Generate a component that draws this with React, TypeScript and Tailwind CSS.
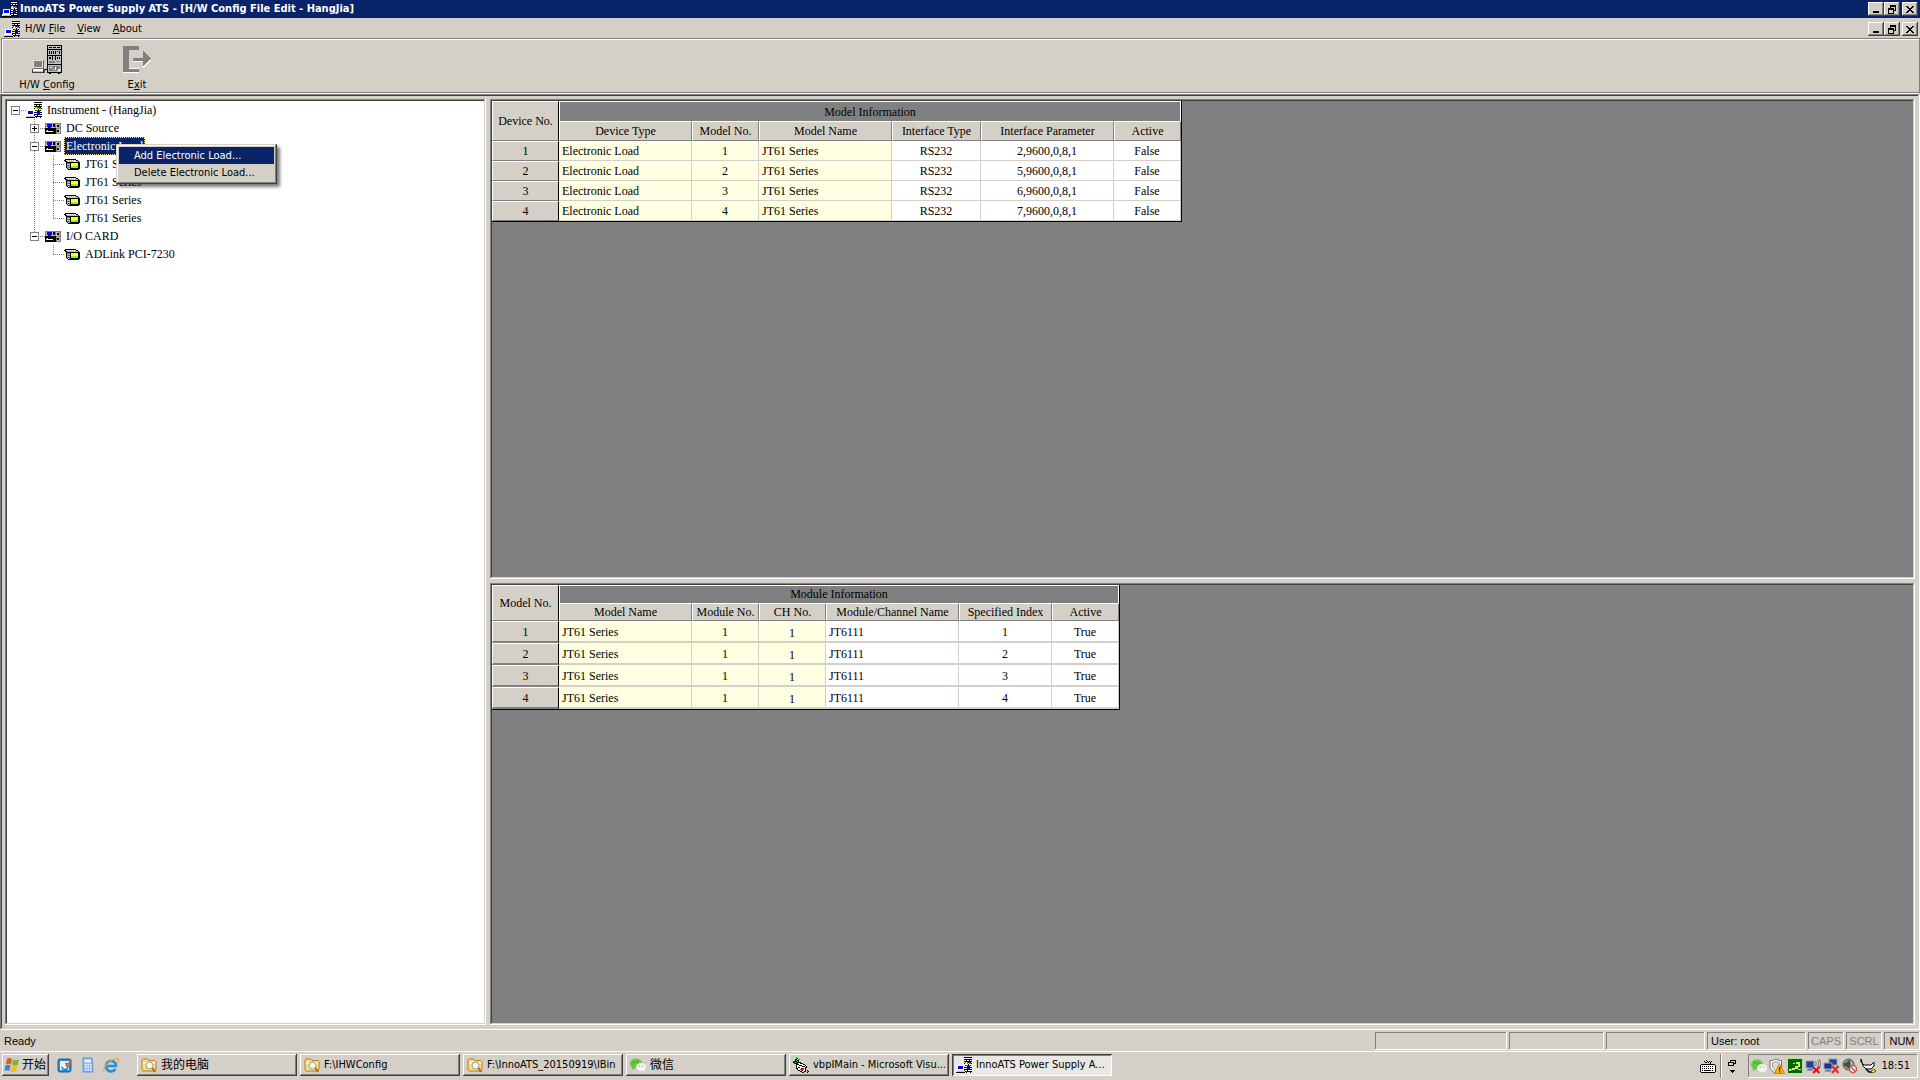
import type { ReactNode } from "react";

const raised =
  "bg-[#d4d0c8] shadow-[inset_-1px_-1px_#404040,inset_1px_1px_#fff,inset_-2px_-2px_#808080]";
const sunken =
  "p-0.5 shadow-[inset_-1px_-1px_#fff,inset_1px_1px_#808080,inset_-2px_-2px_#d4d0c8,inset_2px_2px_#404040]";
const thinSunken = "shadow-[inset_-1px_-1px_#fff,inset_1px_1px_#808080]";

const palette: Record<string, string> = {
  k: "#000000",
  w: "#ffffff",
  g: "#808080",
  l: "#c0c0c0",
  b: "#0000ff",
  r: "#ff0000",
  G: "#00c000",
  L: "#80ff00",
  y: "#ffff00",
  m: "#ff00ff",
  n: "#404040",
};

function Pixels({ rows }: { rows: string[] }) {
  const w = rows[0].length;
  return (
    <svg
      width={w}
      height={rows.length}
      viewBox={`0 0 ${w} ${rows.length}`}
      shapeRendering="crispEdges"
      className="shrink-0"
      aria-hidden="true"
    >
      {rows.flatMap((row, y) =>
        [...row].map((c, x) =>
          palette[c] ? <rect key={`${x}-${y}`} x={x} y={y} width={1} height={1} fill={palette[c]} /> : null,
        ),
      )}
    </svg>
  );
}

const rackRows = [
  "........kkkkkkkk",
  ".........wwwwww.",
  "........kkkkkkkk",
  ".........wkwwkw.",
  "........kkkkkkkk",
  ".........GwGkrk.",
  "........kyyGyGGk",
  ".........wwykww.",
  ".wwwwwww.kGGkGk.",
  ".wbbbbbw.wykbbw.",
  ".wbbbbbwkkbbbbkk",
  ".wbbbbbw.wwkbbw.",
  ".wwwwwwwkkkkbbkk",
  "wwwwwwwwkwwkwww.",
  "wlllllllwkkkkkkk",
  "kkkkkkkkk.k...k.",
];

const unitRows = [
  "gggggggggggggggg",
  "glbbbbblkkglllgg",
  "glbbbbblkkglkklg",
  "glbbbbblkkglkklg",
  "gllbbbllllglllgg",
  "kkkkkkkkkkkggggg",
  "kkkkkkkkkkkglllg",
  "kkwkkkkkkkkgkklg",
  "kwwwwwwwkkkgkklg",
  "kkkkkkkkkkkglllg",
  "kkkkkkkkkkkggggg",
];

const moduleRows = [
  ".kkkkkkkkkkk....",
  "kkwlwlwlwlwlkk..",
  ".kklllllllllllk.",
  "..kkkkkkkkkkkkkk",
  "..kgmmkyyyyyyykk",
  "..klllkyyyyyyykk",
  "..kgmmkwwwwwwwkk",
  "..klllkLLLLLLLkk",
  "..kgmmkLLLLLLLkk",
  "...kllkkkkkkkkkk",
  "....kkkkkkkkkkk.",
];

const RackIcon = () => <Pixels rows={rackRows} />;

function RackLarge() {
  return (
    <svg width="32" height="30" viewBox="0 0 32 30" shapeRendering="crispEdges" aria-hidden="true">
      <path d="M16 0h15v29h-15z" fill="#000" />
      <path d="M17 1h13v3h-13zM17 5h13v5h-13zM17 11h13v4h-13zM17 16h13v4h-13zM17 21h13v7h-13z" fill="#c0c0c0" />
      <path d="M18 2h3v1h-3zM22 2h3v1h-3zM26 2h3v1h-3zM18 6h1v3h-1zM20 6h1v3h-1zM22 6h1v3h-1zM24 6h1v3h-1zM26 6h1v1h-1zM28 6h1v3h-1zM18 12h2v2h-2zM21 11h1v4h-1zM24 11h1v4h-1zM26 12h1v2h-1zM28 12h1v2h-1z" fill="#000" />
      <path d="M18 17h6v2h-6zM25 17h4v1h-4zM18 22h11v5h-11z" fill="#808080" />
      <path d="M19 23h2v1h-2zM22 25h1v1h-1zM24 23h1v3h-1zM27 25h2v2h-2z" fill="#fff" />
      <path d="M18 29h2v1h-2zM27 29h2v1h-2zM13 25h3v1h-3z" fill="#000" />
      <path d="M1 15h12v10h-12z" fill="#606060" />
      <path d="M2 16h10v8h-10z" fill="#e4e4e4" />
      <path d="M3 17h8v6h-8z" fill="#808080" />
      <path d="M0 25h14v4h-14z" fill="#404040" />
      <path d="M1 25h11v2h-11z" fill="#fff" />
      <path d="M1 27h11v1h-11z" fill="#c0c0c0" />
    </svg>
  );
}

function ExitIcon() {
  return (
    <svg width="30" height="30" viewBox="0 0 30 30" shapeRendering="crispEdges" aria-hidden="true">
      <path d="M2 2h15v3h-10v19h10v5h-16v-2zM11 14h10v-6l9 8-9 8v-6h-10z" fill="#fff" />
      <path d="M1 1h16v4h-10v20h10v3h-16zM11 13h10v-7l8 8-8 8v-5h-10z" fill="#808080" />
    </svg>
  );
}

function FolderIcon() {
  return (
    <svg width="16" height="16" viewBox="0 0 16 16" className="shrink-0" aria-hidden="true">
      <path d="M1 3.5 2 2h5l1 1.5h6l1 1V13l-1 1H2l-1-1z" fill="#f9dc86" stroke="#b8801c" />
      <path d="M2 5h12v2H2z" fill="#fff3b8" />
      <circle cx="8.5" cy="8.5" r="3.5" fill="#f0fafc" stroke="#a09a7c" />
      <path d="m11.500 11 2.500 4" stroke="#b06a1c" strokeWidth="2" />
    </svg>
  );
}

function WindowsLogo() {
  return (
    <svg width="16" height="16" viewBox="0 0 16 16" className="shrink-0" aria-hidden="true">
      <path d="M3 2c2-1.500 3-1 5 0L6.800 7.500C5 6.500 4 6.500 1.800 7.500z" fill="#e8542a" />
      <path d="M9 2.400c2 1 3.500 1 6 0L13.800 8c-2 1-4 1-6 0z" fill="#7ab82c" />
      <path d="M1.500 8.500c2-1 3.500-1 5 0l-1.200 5.500c-1.800-1-3-1-5 0z" fill="#3f7fd8" />
      <path d="M7.500 9c2 1 4 1 6 0L12.200 14.500c-2 1-4 1-6 0z" fill="#f4bd1e" />
    </svg>
  );
}

function DesktopIcon() {
  return (
    <svg width="16" height="16" viewBox="0 0 16 16" aria-hidden="true">
      <rect x="1" y="2" width="13" height="13" rx="2" fill="#2a8ad8" stroke="#1a5ca8" />
      <rect x="3" y="4" width="9" height="9" fill="#f4faff" />
      <path d="M5 9.500a3 3 0 1 0 3-3" fill="none" stroke="#2a7ac8" strokeWidth="1.500" />
      <path d="m8 9 6-7 1.500 1.500-6 6.500z" fill="#d8683c" />
    </svg>
  );
}

function CalculatorIcon() {
  return (
    <svg width="14" height="16" viewBox="0 0 14 16" aria-hidden="true">
      <path d="M2 1h9l1 14H2z" fill="#8fb8ec" stroke="#6a92cc" />
      <path d="M3.500 2.500h6.500v3h-6.500z" fill="#e8f2ff" />
      <path d="M4 7h1.500v1.500H4zM6.500 7H8v1.500H6.500zM9 7h1.500v1.500H9zM4 9.500h1.500V11H4zM6.500 9.500H8V11H6.500zM9 9.500h1.500V11H9zM4 12h1.500v1.500H4zM6.500 12H8v1.500H6.500zM9 12h1.500v1.500H9z" fill="#fff" />
    </svg>
  );
}

function ExplorerIcon() {
  return (
    <svg width="16" height="16" viewBox="0 0 16 16" aria-hidden="true">
      <path d="M13.500 9H4.500M13.300 9.500A5.200 5.200 0 1 0 12.500 12" fill="none" stroke="#2a8fdc" strokeWidth="2.600" />
      <path d="M1 14.500C-1 11 8 1.500 14.500 1.500c1.500.5 1 2.500 0 4" fill="none" stroke="#e8b02a" strokeWidth="1.200" />
    </svg>
  );
}

function WeChatIcon() {
  return (
    <svg width="16" height="16" viewBox="0 0 16 16" className="shrink-0" aria-hidden="true">
      <ellipse cx="6" cy="6.500" rx="6" ry="5" fill="#62c93a" />
      <path d="m2 10-.5 3L5 11z" fill="#62c93a" />
      <ellipse cx="11" cy="10" rx="5" ry="4" fill="#f2f4ee" />
      <path d="m13 13 1.500 2 .5-3z" fill="#f2f4ee" />
      <path d="M3.500 4.500h1v1h-1zM7 4.500h1v1H7z" fill="#1c5a12" />
      <path d="M9 8.500h1v1H9zM12 8.500h1v1h-1z" fill="#8a8f88" />
    </svg>
  );
}

const VbIcon = () => (
  <Pixels
    rows={[
      "...G............",
      "...Gk...........",
      "..kk.GG.........",
      "..kGkk..........",
      "kkkkGk..........",
      "kGGkkkkk........",
      ".kkkkwwkkk......",
      "...kkkwwwwkk....",
      "...kwwkkkwwwk...",
      "...kwwwwwkkkwk..",
      "...kwkkwwwwwkk..",
      "...kkwwwkrrwk...",
      "....kwwrrrrwk...",
      ".....kkwrrwwk.k.",
      ".......kkwwkk.gk",
      ".........kk...k.",
    ]}
  />
);

const KeyboardIcon = () => (
  <Pixels
    rows={[
      "......k.........",
      "....k..k.k.k....",
      ".....kk.k.k.....",
      "..........k.....",
      ".kkkkkkkkkkkkkk.",
      "kwwwwwwwwwwwwwwk",
      "kwkwkwkwkwkwkwwk",
      "kwwwwwwwwwwwwwwk",
      "kwkwkwkwkwkwkwwk",
      "kwwwwwwwwwwwwwwk",
      "kwkwkkkkkkkwkwwk",
      "kwwwwwwwwwwwwwwk",
      ".kkkkkkkkkkkkkk.",
    ]}
  />
);

const ShieldIcon = () => (
  <svg width="16" height="16" viewBox="0 0 16 16" aria-hidden="true">
    <path d="M7 1c2 1.500 4 1.500 5.500 1.500V8c0 4-3 6-5.500 7C4 14 1 12 1 8V2.500C3 2.500 5 2.500 7 1z" fill="#fff" stroke="#707070" />
    <path d="M7 3.500c1.500 1 2.500 1 3.500 1V8c0 2-2 4-3.500 5C5 12 3.500 10 3.500 8V4.500c1 0 2 0 3.500-1z" fill="#d8d8d8" stroke="#a0a0a0" />
    <path d="m10.500 6 5 9.500h-10z" fill="#ffb400" stroke="#e07a00" />
    <path d="M10 9h1.200v3.500H10zM10 13.300h1.200v1.200H10z" fill="#402000" />
  </svg>
);

const GreenIcon = () => (
  <svg width="16" height="16" viewBox="0 0 16 16" shapeRendering="crispEdges" aria-hidden="true">
    <path d="M0 0h16v16H0z" fill="#b8dca8" />
    <path d="M1 1h14v14H1z" fill="#006a00" />
    <path d="M2 11h3v-1h3V8h3V6H9V4h4v5h-2v2h3v1h-3v-1H8v1H4v1H2zM6 5h2v1H6z" fill="#d8f070" />
  </svg>
);

const WirelessIcon = () => (
  <svg width="16" height="16" viewBox="0 0 16 16" aria-hidden="true">
    <path d="M1 3h8v7H1zM3 11h5v1.500H2z" fill="#27418c" stroke="#8fa0c8" />
    <path d="M10.500 3.500q1.500 2 0 4.500M12.500 2q2.500 3 0 7M14.500 1q2.500 4 0 9" fill="none" stroke="#707070" />
    <path d="m8 9 6.500 6M14.500 9 8 15" stroke="#e81414" strokeWidth="2.200" />
  </svg>
);

const NetworkIcon = () => (
  <svg width="17" height="16" viewBox="0 0 17 16" aria-hidden="true">
    <path d="M6 1h8v6H6z" fill="#27418c" stroke="#8fa0c8" />
    <path d="M1 5h8v6H1zM3 12h5v1.500H2z" fill="#1d3478" stroke="#8fa0c8" />
    <path d="m9 8 6.500 7M15.500 8 9 15" stroke="#e83020" strokeWidth="2.400" />
  </svg>
);

const MutedIcon = () => (
  <svg width="16" height="16" viewBox="0 0 16 16" aria-hidden="true">
    <circle cx="6.500" cy="6.500" r="5.500" fill="#8a8a8a" stroke="#5a5a5a" />
    <path d="M2 5h2l4-3.500v10L4 8H2z" fill="#484848" />
    <path d="M9 3.500q2 3 0 6" fill="none" stroke="#e0e0e0" />
    <circle cx="11" cy="11" r="3.500" fill="#fff" stroke="#d85040" strokeWidth="1.500" />
    <path d="m8.500 8.500 5 5" stroke="#d85040" strokeWidth="1.500" />
  </svg>
);

const PlugIcon = () => (
  <svg width="17" height="16" viewBox="0 0 17 16" aria-hidden="true">
    <path d="M1 1v3l3 3h7l3-3v4l-3 3H6L3 8z" fill="#fff" stroke="#000" />
    <path d="m6 11 3 3h3" fill="none" stroke="#000" strokeWidth="1.500" />
    <path d="m11 13 3-2 2 2-3 2z" fill="#e8e020" stroke="#606000" />
  </svg>
);

function WindowButtons({ scope }: { scope: string }) {
  const base = `flex h-3.5 w-4 items-center justify-center ${raised}`;
  return (
    <div className="flex">
      <button className={base} aria-label={`Minimize ${scope}`}>
        <Pixels rows={["........", "........", "........", "........", "........", "........", ".kkkkkk.", ".kkkkkk."]} />
      </button>
      <button className={base} aria-label={`Restore ${scope}`}>
        <Pixels
          rows={["..kkkkkk", "..kkkkkk", "..k....k", "kkkkkk.k", "kkkkkk.k", "k....kkk", "k....k..", "k....k..", "kkkkkk.."]}
        />
      </button>
      <button className={`ml-0.5 ${base}`} aria-label={`Close ${scope}`}>
        <Pixels rows={["kk....kk", ".kk..kk.", "..kkkk..", "...kk...", "..kkkk..", ".kk..kk.", "kk....kk"]} />
      </button>
    </div>
  );
}

type Branch = "none" | "line" | "tee" | "end" | "plus" | "minus" | "minusEnd" | "root";

function BranchCell({ kind }: { kind: Branch }) {
  const box = kind === "plus" || kind === "minus" || kind === "minusEnd" || kind === "root";
  const up = kind !== "none" && kind !== "root";
  const down = kind === "line" || kind === "tee" || kind === "plus" || kind === "minus";
  const across = kind !== "none" && kind !== "line";
  const drawing = (
    <svg width="19" height="18" viewBox="0 0 19 18" shapeRendering="crispEdges" aria-hidden="true">
      <g stroke="#808080" strokeDasharray="1 1" fill="none">
        {up && <path d="M8.500 0v9" />}
        {down && <path d="M8.500 10v8" />}
        {across && <path d="M8 9.500h11" />}
      </g>
      {box && (
        <>
          <path d="M4.500 5.500h8v8h-8z" fill="#fff" stroke="#808080" />
          <path d="M6 9.500h5" stroke="#000" />
          {kind === "plus" && <path d="M8.500 7v5" stroke="#000" />}
        </>
      )}
    </svg>
  );
  return box ? (
    <button aria-label={kind === "plus" ? "Expand" : "Collapse"}>{drawing}</button>
  ) : (
    drawing
  );
}

const tree: { label: string; branches: Branch[]; icon: string[]; selected?: boolean }[] = [
  { label: "Instrument - (HangJia)", branches: ["root"], icon: rackRows },
  { label: "DC Source", branches: ["none", "plus"], icon: unitRows },
  { label: "Electronic Load", branches: ["none", "minus"], icon: unitRows, selected: true },
  { label: "JT61 Series", branches: ["none", "line", "tee"], icon: moduleRows },
  { label: "JT61 Series", branches: ["none", "line", "tee"], icon: moduleRows },
  { label: "JT61 Series", branches: ["none", "line", "tee"], icon: moduleRows },
  { label: "JT61 Series", branches: ["none", "line", "end"], icon: moduleRows },
  { label: "I/O CARD", branches: ["none", "minusEnd"], icon: unitRows },
  { label: "ADLink PCI-7230", branches: ["none", "none", "end"], icon: moduleRows },
];

function InstrumentTree() {
  return (
    <div className={`relative w-[481px] shrink-0 bg-white ${sunken}`}>
      <ul className="font-['Liberation_Serif',serif] text-xs leading-[18px]">
        {tree.map((row, i) => (
          <li key={i} className="flex h-[18px] items-center">
            {row.branches.map((kind, j) => (
              <BranchCell key={j} kind={kind} />
            ))}
            <span className="flex w-[19px] shrink-0">
              <Pixels rows={row.icon} />
            </span>
            <span
              className={
                row.selected
                  ? "bg-[#0a246a] px-0.5 text-white outline-1 -outline-offset-1 outline-dotted outline-[#f5db95]"
                  : "px-0.5"
              }
            >
              {row.label}
            </span>
          </li>
        ))}
      </ul>
      <div
        role="menu"
        className="absolute top-[45px] left-[111px] w-[161px] bg-[#d4d0c8] p-[3px] text-[11px] leading-[17px] shadow-[inset_-1px_-1px_#404040,inset_1px_1px_#d4d0c8,inset_-2px_-2px_#808080,inset_2px_2px_#fff,3px_3px_3px_rgba(0,0,0,0.5)]"
      >
        <button role="menuitem" className="block w-full bg-[#0a246a] pl-[15px] text-left text-white">
          Add Electronic Load...
        </button>
        <button role="menuitem" className="block w-full pl-[15px] text-left">
          Delete Electronic Load...
        </button>
      </div>
    </div>
  );
}

type Column = { title: string; col: string; cell: string };

function InfoTable({
  corner,
  group,
  columns,
  rows,
  tall,
}: {
  corner: string;
  group: string;
  columns: Column[];
  rows: string[][];
  tall?: boolean;
}) {
  const head =
    "border-t border-l border-r border-b border-t-white border-l-white border-r-[#808080] border-b-[#808080] bg-[#d4d0c8]";
  const headHeight = tall ? "h-[18px]" : "h-5";
  const rowHeight = tall ? "h-[22px]" : "h-5";
  const thick = tall ? "border-b-2 pt-0.5" : "border-b pt-0";
  return (
    <div className="w-fit border-r border-b border-black">
      <table className="table-fixed border-separate border-spacing-0 font-['Liberation_Serif',serif] text-xs leading-4">
        <colgroup>
          <col className="w-[67px]" />
          {columns.map((c) => (
            <col key={c.title} className={c.col} />
          ))}
        </colgroup>
        <thead>
          <tr className={headHeight}>
            <th
              rowSpan={2}
              scope="col"
              className="border-t border-r border-b border-l border-t-white border-r-black border-b-[#808080] border-l-white bg-[#d4d0c8] p-0 font-normal"
            >
              {corner}
            </th>
            <th
              colSpan={columns.length}
              scope="colgroup"
              className="border-t border-r border-l border-white bg-[#808080] p-0 font-normal"
            >
              {group}
            </th>
          </tr>
          <tr className={headHeight}>
            {columns.map((c) => (
              <th key={c.title} scope="col" className={`${head} p-0 font-normal whitespace-nowrap`}>
                {c.title}
              </th>
            ))}
          </tr>
        </thead>
        <tbody>
          {rows.map((row, i) => (
            <tr key={i} className={rowHeight}>
              <th
                scope="row"
                className={`border-t border-r border-l ${thick} border-t-white border-r-black border-b-[#808080] border-l-white bg-[#d4d0c8] px-0 pb-0 font-normal`}
              >
                {i + 1}
              </th>
              {row.map((value, j) => (
                <td key={j} className={`border-r ${thick} border-[#d4d0c8] px-[3px] pb-0 ${columns[j].cell}`}>
                  {value}
                </td>
              ))}
            </tr>
          ))}
        </tbody>
      </table>
    </div>
  );
}

const modelColumns: Column[] = [
  { title: "Device Type", col: "w-[133px]", cell: "bg-[#ffffe1]" },
  { title: "Model No.", col: "w-[67px]", cell: "bg-[#ffffe1] text-center" },
  { title: "Model Name", col: "w-[133px]", cell: "bg-[#ffffe1]" },
  { title: "Interface Type", col: "w-[89px]", cell: "bg-white text-center" },
  { title: "Interface Parameter", col: "w-[133px]", cell: "bg-white text-center" },
  { title: "Active", col: "w-[67px]", cell: "bg-white text-center" },
];

const modelRows = ["2", "5", "6", "7"].map((port, i) => [
  "Electronic Load",
  String(i + 1),
  "JT61 Series",
  "RS232",
  `${port},9600,0,8,1`,
  "False",
]);

const moduleColumns: Column[] = [
  { title: "Model Name", col: "w-[133px]", cell: "bg-[#ffffe1]" },
  { title: "Module No.", col: "w-[67px]", cell: "bg-[#ffffe1] text-center" },
  { title: "CH No.", col: "w-[67px]", cell: "bg-[#ffffe1] text-center align-bottom" },
  { title: "Module/Channel Name", col: "w-[133px]", cell: "bg-white" },
  { title: "Specified Index", col: "w-[93px]", cell: "bg-white text-center" },
  { title: "Active", col: "w-[67px]", cell: "bg-white text-center" },
];

const channelRows = ["1", "2", "3", "4"].map((n) => ["JT61 Series", "1", "1", "JT6111", n, "True"]);

function TaskButton({ icon, active, children }: { icon: ReactNode; active?: boolean; children: ReactNode }) {
  return (
    <button
      className={`flex h-[22px] w-40 items-center gap-1 pr-1 pl-1 text-left whitespace-nowrap ${
        active
          ? "bg-[#eae8e4] shadow-[inset_1px_1px_#404040,inset_-1px_-1px_#fff,inset_2px_2px_#808080]"
          : raised
      }`}
    >
      {icon}
      <span className="overflow-hidden">{children}</span>
    </button>
  );
}

export default function App() {
  return (
    <div className="flex h-screen flex-col overflow-hidden bg-[#d4d0c8] font-['DejaVu_Sans_Condensed','Noto_Sans_CJK_SC',sans-serif] text-[11px] leading-4 text-black">
      <header className="flex h-[18px] shrink-0 items-center bg-[#0a246a] pr-0.5 pl-0.5 text-white">
        <RackIcon />
        <h1 className="ml-0.5 flex-1 font-bold">InnoATS Power Supply ATS - [H/W Config File Edit - HangJia]</h1>
        <WindowButtons scope="application" />
      </header>

      <nav className="flex h-5 shrink-0 items-center pt-0.5 pr-0.5 pl-1">
        <RackIcon />
        <div className="flex flex-1 gap-3 pl-[5px]">
          <button>
            H/W <u>F</u>ile
          </button>
          <button>
            <u>V</u>iew
          </button>
          <button>
            <u>A</u>bout
          </button>
        </div>
        <WindowButtons scope="document" />
      </nav>

      <div className="ml-px flex h-14 shrink-0 border border-[#808080] border-b-white pt-1 shadow-[inset_1px_1px_#fff,inset_0_-1px_#808080]">
        <button className="flex w-[90px] flex-col items-center gap-[3px] pt-0.5">
          <RackLarge />
          <span>
            H/W <u>C</u>onfig
          </span>
        </button>
        <button className="flex w-[90px] flex-col items-center gap-[3px] pt-0.5">
          <ExitIcon />
          <span>
            E<u>x</u>it
          </span>
        </button>
      </div>

      <main className={`flex min-h-0 flex-1 ${sunken}`}>
        <div className="flex min-w-0 flex-1 gap-1 p-[3px]">
          <InstrumentTree />
          <div className="flex min-w-0 flex-1 flex-col gap-1">
            <section className={`min-h-0 flex-[480] bg-[#808080] ${sunken}`}>
              <InfoTable corner="Device No." group="Model Information" columns={modelColumns} rows={modelRows} />
            </section>
            <section className={`min-h-0 flex-[442] bg-[#808080] ${sunken}`}>
              <InfoTable corner="Model No." group="Module Information" columns={moduleColumns} rows={channelRows} tall />
            </section>
          </div>
        </div>
      </main>

      <footer className="flex h-[21px] shrink-0 items-center gap-0.5 pl-1 font-['Liberation_Sans',sans-serif]">
        <span className="flex-1">Ready</span>
        <span className={`h-[18px] w-[132px] ${thinSunken}`} />
        <span className={`h-[18px] w-[95px] ${thinSunken}`} />
        <span className={`h-[18px] w-[99px] ${thinSunken}`} />
        <span className={`h-[18px] w-[99px] pl-1 leading-[18px] ${thinSunken}`}>User: root</span>
        <span className={`h-[18px] w-9 text-center leading-[18px] text-[#808080] ${thinSunken}`}>CAPS</span>
        <span className={`h-[18px] w-9 text-center leading-[18px] text-[#808080] ${thinSunken}`}>SCRL</span>
        <span className={`h-[18px] w-9 text-center leading-[18px] ${thinSunken}`}>NUM</span>
      </footer>

      <div className="flex h-[29px] shrink-0 items-start border-t border-white pt-0.5 pr-0.5 pl-0.5">
        <button className={`flex h-[22px] w-[47px] items-center gap-0.5 pl-0.5 text-xs whitespace-nowrap ${raised}`}>
          <WindowsLogo />
          开始
        </button>
        <div className="ml-2 flex h-[22px] w-20 items-center gap-2">
          <button aria-label="Show Desktop">
            <DesktopIcon />
          </button>
          <button aria-label="Calculator">
            <CalculatorIcon />
          </button>
          <button aria-label="Internet Explorer">
            <ExplorerIcon />
          </button>
        </div>
        <div className="flex flex-1 gap-[3px]">
          <TaskButton icon={<FolderIcon />}>
            <span className="text-xs">我的电脑</span>
          </TaskButton>
          <TaskButton icon={<FolderIcon />}>F:\IHWConfig</TaskButton>
          <TaskButton icon={<FolderIcon />}>F:\InnoATS_20150919\IBin</TaskButton>
          <TaskButton icon={<WeChatIcon />}>
            <span className="text-xs">微信</span>
          </TaskButton>
          <TaskButton icon={<VbIcon />}>vbpIMain - Microsoft Visu...</TaskButton>
          <TaskButton active icon={<RackIcon />}>
            InnoATS Power Supply A...
          </TaskButton>
        </div>
        <div className="flex h-6 items-center">
          <button aria-label="Keyboard layout">
            <KeyboardIcon />
          </button>
          <span className="ml-1 h-6 w-0.5 border-r border-l border-r-white border-l-[#808080]" />
          <button className="mr-3 ml-1.5 flex w-2 flex-col items-center gap-1" aria-label="Language options">
            <Pixels rows={["..kkkkkk", "..k....k", "kkkkkk.k", "k....kkk", "k....k..", "kkkkkk.."]} />
            <Pixels rows={["kkkkk", ".kkk.", "..k.."]} />
          </button>
          <div className={`flex h-6 w-[170px] items-center gap-0.5 pl-[3px] ${thinSunken}`}>
            <WeChatIcon />
            <ShieldIcon />
            <GreenIcon />
            <WirelessIcon />
            <NetworkIcon />
            <MutedIcon />
            <PlugIcon />
            <time className="flex-1 pr-2 text-right">18:51</time>
          </div>
        </div>
      </div>
    </div>
  );
}
